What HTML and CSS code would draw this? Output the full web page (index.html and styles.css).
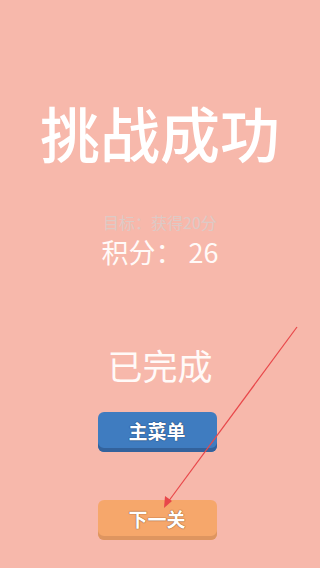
FILE: index.html
```html
<!DOCTYPE html>
<html lang="zh-CN">
<head>
    <meta charset="UTF-8">
    <meta name="viewport" content="width=device-width, initial-scale=1.0">
    <title>挑战成功</title>
    <link rel="stylesheet" href="styles.css">
</head>
<body>
    <main class="result">
        <h1 class="result-title">挑战成功</h1>
        <p class="result-target">目标：获得20分</p>
        <p class="result-score">积分： 26</p>
        <p class="result-done">已完成</p>
        <button class="btn btn-menu" type="button">主菜单</button>
        <button class="btn btn-next" type="button">下一关</button>
    </main>

    <svg class="hint-arrow" width="320" height="568" viewBox="0 0 320 568">
        <line x1="297" y1="327" x2="168" y2="502" stroke="#e8474a" stroke-width="1.2"/>
        <polygon points="164,508 165,496 172,501" fill="#e8474a"/>
    </svg>
</body>
</html>
```

FILE: styles.css
```css
body {
    margin: 0;
    padding: 0;
    width: 320px;
    height: 568px;
    overflow: hidden;
    background-color: #f7b8ab;
    font-family: "Noto Sans CJK SC", "Noto Sans", sans-serif;
    position: relative;
}
.result {
    display: flex;
    flex-direction: column;
    align-items: center;
    padding-top: 102px;
}
.result p {
    margin: 0;
}
.result-title {
    margin: 0;
    font-size: 60px;
    line-height: 60px;
    font-weight: 500;
    color: #ffffff;
}
.result-target {
    margin-top: 50px !important;
    font-size: 16px;
    line-height: 20px;
    color: #ddcac6;
}
.result-score {
    margin-top: 5px !important;
    font-size: 27px;
    line-height: 30px;
    color: #fffaf8;
}
.result-done {
    margin-top: 78px !important;
    font-size: 35px;
    line-height: 40px;
    color: #fffaf8;
}
.btn {
    width: 119px;
    height: 40px;
    margin-right: 6px;
    padding: 0 0 4px;
    border: none;
    border-radius: 6px;
    font-family: inherit;
    font-size: 19px;
    font-weight: 700;
    color: #ffffff;
    cursor: pointer;
}
.btn-menu {
    margin-top: 27px;
    background-color: #3f7cc0;
    box-shadow: inset 0 -4px 0 #33629c;
    text-shadow: 0 0 1px #1f3d66, 0 0 1px #1f3d66;
}
.btn-next {
    margin-top: 48px;
    background-color: #f6a76b;
    box-shadow: inset 0 -4px 0 #de9560;
    text-shadow: 0 0 1px #8a4d24, 0 0 1px #8a4d24;
}
.hint-arrow {
    position: absolute;
    top: 0;
    left: 0;
    pointer-events: none;
}
```
